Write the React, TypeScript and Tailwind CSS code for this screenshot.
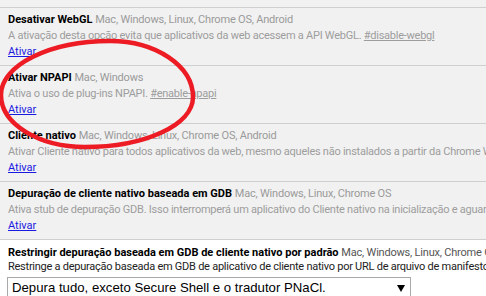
type Experiment = {
  title: string;
  platforms: string;
  description: string;
  tag?: string;
};

const experiments: Experiment[] = [
  {
    title: "Desativar WebGL",
    platforms: "Mac, Windows, Linux, Chrome OS, Android",
    description: "A ativação desta opção evita que aplicativos da web acessem a API WebGL.",
    tag: "#disable-webgl",
  },
  {
    title: "Ativar NPAPI",
    platforms: "Mac, Windows",
    description: "Ativa o uso de plug-ins NPAPI.",
    tag: "#enable-npapi",
  },
  {
    title: "Cliente nativo",
    platforms: "Mac, Windows, Linux, Chrome OS, Android",
    description:
      "Ativar Cliente nativo para todos aplicativos da web, mesmo aqueles não instalados a partir da Chrome Web Store.",
  },
  {
    title: "Depuração de cliente nativo baseada em GDB",
    platforms: "Mac, Windows, Linux, Chrome OS",
    description:
      "Ativa stub de depuração GDB. Isso interromperá um aplicativo do Cliente nativo na inicialização e aguardará a anexação de nacl-gdb.",
  },
];

const ExperimentRow: React.FC<{ exp: Experiment }> = ({ exp }) => (
  <div className="border-t border-[#cfcfcf] pt-[4px] pb-[5px] pl-2 whitespace-nowrap">
    <div className="leading-[16px]">
      <span className="font-bold text-black">{exp.title}</span>{" "}
      <span className="text-[#9a9a9a] tracking-[-0.2px]">{exp.platforms}</span>
    </div>
    <div className="leading-[16px] text-[#9d9d9d] tracking-[-0.25px]">
      {exp.description}
      {exp.tag && (
        <>
          {" "}
          <span className="underline">{exp.tag}</span>
        </>
      )}
    </div>
    <div className="leading-[16px]">
      <a href="#" className="text-[#1a1ae0] underline">
        Ativar
      </a>
    </div>
  </div>
);

export default function App() {
  return (
    <div className="relative w-[486px] h-[296px] overflow-hidden bg-[#f1f1f1] font-['Roboto',sans-serif] text-[11px]">
      <div className="h-[7px]" />
      {experiments.map((exp) => (
        <ExperimentRow exp={exp} key={exp.title} />
      ))}
      <div className="bg-white border-t border-[#cfcfcf] pt-[6px] pl-2 h-full whitespace-nowrap">
        <div className="leading-[14px]">
          <span className="font-bold text-black">
            Restringir depuração baseada em GDB de cliente nativo por padrão
          </span>{" "}
          <span className="text-[#555] tracking-[-0.2px]">Mac, Windows, Linux, Chrome OS</span>
        </div>
        <div className="leading-[14px] text-[#222] tracking-[-0.25px]">
          Restringe a depuração baseada em GDB de aplicativo de cliente nativo por URL de arquivo de manifesto.
        </div>
        <div className="mt-[3px] -ml-px flex items-center justify-between w-[404px] h-[22px] border border-[#a9a9a9] bg-white pl-1 pr-[5px] font-['Liberation_Sans',Arial,sans-serif] text-[13.2px] text-black">
          <span>Depura tudo, exceto Secure Shell e o tradutor PNaCl.</span>
          <svg width="8" height="7" viewBox="0 0 8 7">
            <path d="M0 0 H8 L4 7 Z" fill="#000" />
          </svg>
        </div>
      </div>
      <svg
        className="absolute left-0 top-0 pointer-events-none"
        width="486"
        height="296"
        viewBox="0 0 486 296"
      >
        <path
          d="M1 95 C1 65 50 41 110 41 C156 41 193 66 193 97 C193 125 145 147 85 147 C39 147 1 124 1 95 Z"
          fill="none"
          stroke="#ed1c24"
          strokeWidth="4.5"
        />
      </svg>
    </div>
  );
}
